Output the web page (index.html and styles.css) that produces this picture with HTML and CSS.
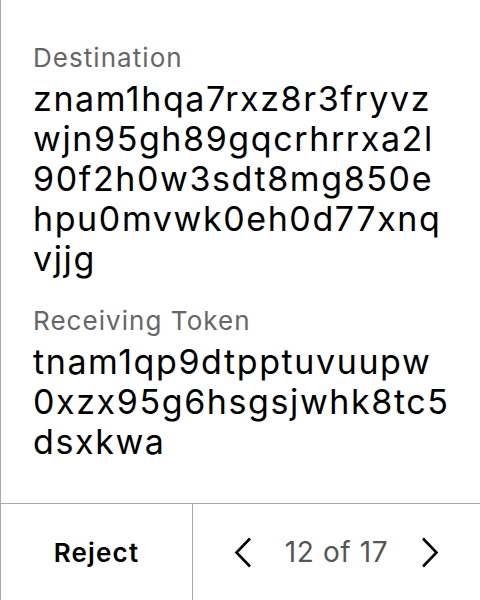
FILE: index.html
```html
<!DOCTYPE html>
<html>
<head>
<meta charset="utf-8">
<link rel="stylesheet" href="styles.css">
</head>
<body>
<div class="screen">
  <main class="content">
    <section class="field">
      <div class="label">Destination</div>
      <div class="value">znam1hqa7rxz8r3fryvz<br>wjn95gh89gqcrhrrxa2l<br>90f2h0w3sdt8mg850e<br>hpu0mvwk0eh0d77xnq<br>vjjg</div>
    </section>
    <section class="field">
      <div class="label">Receiving Token</div>
      <div class="value">tnam1qp9dtpptuvuupw<br>0xzx95g6hsgsjwhk8tc5<br>dsxkwa</div>
    </section>
  </main>
  <footer class="footer">
    <div class="reject">Reject</div>
    <div class="pager">
      <svg class="chev" width="18" height="31" viewBox="0 0 18 31"><polyline points="16,1.5 2.5,15.5 16,29.5" fill="none" stroke="#000" stroke-width="2.6"/></svg>
      <span class="count">12 of 17</span>
      <svg class="chev" width="18" height="31" viewBox="0 0 18 31"><polyline points="2,1.5 15.5,15.5 2,29.5" fill="none" stroke="#000" stroke-width="2.6"/></svg>
    </div>
  </footer>
</div>
</body>
</html>
```
FILE: styles.css
```css
html, body {
  margin: 0;
  padding: 0;
  background: #fff;
}
body {
  font-family: Inter, "Noto Sans", sans-serif;
  color: #000;
}
.screen {
  width: 480px;
  height: 600px;
  box-sizing: border-box;
  border-left: 1px solid #a8a8a8;
  display: flex;
  flex-direction: column;
}
.content {
  flex: 1;
  padding: 42px 0 0 32px;
  display: flex;
  flex-direction: column;
  gap: 26px;
}
.field {
  display: flex;
  flex-direction: column;
  gap: 5px;
}
.label {
  font-size: 26px;
  line-height: 32px;
  letter-spacing: 1.05px;
  color: #666;
}
.value {
  font-size: 34px;
  line-height: 40px;
  letter-spacing: 1.6px;
  color: #000;
}
.footer {
  height: 96px;
  flex: none;
  border-top: 1px solid #a8a8a8;
  display: flex;
}
.reject {
  width: 191px;
  border-right: 1px solid #a8a8a8;
  display: flex;
  align-items: center;
  justify-content: center;
  font-size: 26px;
  font-weight: 600;
  letter-spacing: 1.2px;
}
.pager {
  flex: 1;
  display: flex;
  align-items: center;
  justify-content: center;
  gap: 33px;
}
.count {
  font-size: 28px;
  letter-spacing: 0.6px;
  color: #555;
}
.chev {
  display: block;
}
```
